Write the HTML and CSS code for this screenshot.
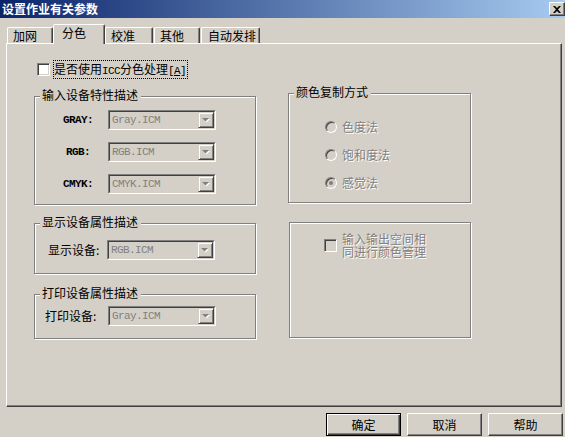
FILE: index.html
```html
<!DOCTYPE html>
<html>
<head>
<meta charset="utf-8">
<title>设置作业有关参数</title>
<link rel="stylesheet" href="styles.css">
</head>
<body>
<div class="titlebar">
  <span class="title">设置作业有关参数</span>
  <span class="close"><svg width="8" height="7" viewBox="0 0 8 7"><path d="M0 0h2l2 2 2-2h2L5 3.5 8 7H6L4 5 2 7H0l3-3.5z" fill="#000"/></svg></span>
</div>
<div class="tabs">
  <div class="tab t1">加网</div>
  <div class="tab t2 active">分色</div>
  <div class="tab t3">校准</div>
  <div class="tab t4">其他</div>
  <div class="tab t5">自动发排</div>
</div>
<div class="panel">
  <div class="col col-left">
    <div class="check-row">
      <span class="checkbox"></span>
      <span class="focus">是否使用<span class="mono">ICC</span>分色处理<span class="mono">[<u>A</u>]</span></span>
    </div>
    <div class="group g1">
      <span class="legend">输入设备特性描述</span>
      <div class="row">
        <span class="lbl">GRAY:</span>
        <div class="combo"><div class="combo-in"><span class="val">Gray.ICM</span><span class="ddbtn"><svg width="8" height="5" viewBox="0 0 8 5"><path d="M1 1h7L4.5 4.5z" fill="#fff"/><path d="M0 0h7L3.5 3.5z" fill="#808080"/></svg></span></div></div>
      </div>
      <div class="row">
        <span class="lbl">RGB:</span>
        <div class="combo"><div class="combo-in"><span class="val">RGB.ICM</span><span class="ddbtn"><svg width="8" height="5" viewBox="0 0 8 5"><path d="M1 1h7L4.5 4.5z" fill="#fff"/><path d="M0 0h7L3.5 3.5z" fill="#808080"/></svg></span></div></div>
      </div>
      <div class="row">
        <span class="lbl">CMYK:</span>
        <div class="combo"><div class="combo-in"><span class="val">CMYK.ICM</span><span class="ddbtn"><svg width="8" height="5" viewBox="0 0 8 5"><path d="M1 1h7L4.5 4.5z" fill="#fff"/><path d="M0 0h7L3.5 3.5z" fill="#808080"/></svg></span></div></div>
      </div>
    </div>
    <div class="group g2">
      <span class="legend">显示设备属性描述</span>
      <div class="row">
        <span class="lbl2">显示设备:</span>
        <div class="combo"><div class="combo-in"><span class="val">RGB.ICM</span><span class="ddbtn"><svg width="8" height="5" viewBox="0 0 8 5"><path d="M1 1h7L4.5 4.5z" fill="#fff"/><path d="M0 0h7L3.5 3.5z" fill="#808080"/></svg></span></div></div>
      </div>
    </div>
    <div class="group g3">
      <span class="legend">打印设备属性描述</span>
      <div class="row">
        <span class="lbl2">打印设备:</span>
        <div class="combo"><div class="combo-in"><span class="val">Gray.ICM</span><span class="ddbtn"><svg width="8" height="5" viewBox="0 0 8 5"><path d="M1 1h7L4.5 4.5z" fill="#fff"/><path d="M0 0h7L3.5 3.5z" fill="#808080"/></svg></span></div></div>
      </div>
    </div>
  </div>
  <div class="col col-right">
    <div class="group r1">
      <span class="legend">颜色复制方式</span>
      <div class="radio-row"><span class="radio"></span><span class="dis">色度法</span></div>
      <div class="radio-row"><span class="radio"></span><span class="dis">饱和度法</span></div>
      <div class="radio-row"><span class="radio checked"></span><span class="dis">感觉法</span></div>
    </div>
    <div class="group r2">
      <div class="check-row2">
        <span class="checkbox disabled"></span>
        <span class="dis two">输入输出空间相<br>同进行颜色管理</span>
      </div>
    </div>
  </div>
</div>
<div class="buttons">
  <div class="btn default">确定</div>
  <div class="btn">取消</div>
  <div class="btn">帮助</div>
</div>
</body>
</html>
```

FILE: styles.css
```css
* { box-sizing: border-box; }
html, body { margin: 0; padding: 0; }
body {
  width: 565px;
  height: 437px;
  overflow: hidden;
  background: #d4d0c8;
  font-family: "Noto Sans CJK SC", "Noto Sans CJK JP", sans-serif;
  font-size: 12px;
  line-height: 12px;
  color: #000;
}
.mono {
  font-family: "Liberation Mono", "DejaVu Sans Mono", monospace;
  font-size: 11px;
  letter-spacing: -0.6px;
}

.titlebar {
  height: 18px;
  background: linear-gradient(to right, #0a246a, #a6caf0);
  display: flex;
  align-items: center;
  justify-content: space-between;
  padding-left: 2px;
}
.title { color: #fff; font-weight: bold; font-size: 12px; }
.close {
  width: 16px;
  height: 14px;
  background: #d4d0c8;
  border: 1px solid;
  border-color: #fff #404040 #404040 #fff;
  box-shadow: inset -1px -1px 0 #808080;
  display: flex;
  align-items: center;
  justify-content: center;
}

.tabs {
  display: flex;
  align-items: flex-end;
  height: 19px;
  margin-top: 6px;
  padding-left: 7px;
}
.tab {
  height: 16px;
  border: 1px solid;
  border-bottom: 0;
  border-color: #fff #404040 transparent #fff;
  box-shadow: inset -1px 0 0 #808080;
  border-radius: 2px 2px 0 0;
  text-align: left;
  padding: 2px 0 0 5px;
}
.tab.active {
  height: 20px;
  margin-bottom: -1px;
  position: relative;
  z-index: 1;
  background: #d4d0c8;
  padding: 2px 0 0 8px;
}
.t1 { width: 46px; }
.t2 { width: 52px; }
.t3 { width: 48px; }
.t4 { width: 46px; margin-left: 1px; }
.t5 { width: 59px; margin-left: 1px; padding-left: 6px; }

.panel {
  margin-left: 6px;
  width: 556px;
  height: 364px;
  border: 1px solid;
  border-color: #fff #404040 #404040 #fff;
  box-shadow: inset -1px -1px 0 #808080;
  display: flex;
  align-items: flex-start;
  gap: 32px;
  padding: 17px 0 0 27px;
}
.col { display: flex; flex-direction: column; }
.col-left { width: 222px; }
.col-right { width: 183px; margin-top: 32px; }

.check-row { display: flex; align-items: center; height: 16px; padding-left: 3px; gap: 4px; }
.checkbox {
  width: 13px;
  height: 13px;
  border: 1px solid;
  border-color: #808080 #fff #fff #808080;
  box-shadow: inset 1px 1px 0 #404040, inset -1px -1px 0 #d4d0c8;
  background: #fff;
  flex: none;
}
.checkbox.disabled { background: #d4d0c8; }
.focus { outline: 1px dotted #000; outline-offset: 0; padding: 2px 1px 1px 0; line-height: 12px; }

.group {
  position: relative;
  border: 1px solid #808080;
  box-shadow: 1px 1px 0 #fff, inset 1px 1px 0 #fff;
}
.legend {
  position: absolute;
  left: 5px;
  top: -8px;
  padding: 0 3px 0 2px;
  background: #d4d0c8;
  line-height: 12px;
}
.g1 { margin-top: 19px; height: 109px; padding-top: 13px; display: flex; flex-direction: column; gap: 12px; }
.g2 { margin-top: 18px; height: 51px; padding-top: 16px; }
.g3 { margin-top: 20px; height: 45px; padding-top: 11px; }

.row { display: flex; align-items: center; }
.lbl {
  width: 40px;
  margin-left: 23px;
  margin-right: 10px;
  text-align: center;
  font-family: "Liberation Mono", "DejaVu Sans Mono", monospace;
  font-size: 11px;
  font-weight: bold;
  letter-spacing: -0.6px;
}
.lbl2 { width: 54px; }
.g2 .lbl2 { margin-left: 13px; margin-right: 5px; }
.g3 .lbl2 { margin-left: 10px; margin-right: 9px; }

.combo {
  width: 108px;
  height: 20px;
  border: 1px solid;
  border-color: #808080 #fff #fff #808080;
}
.combo-in {
  height: 100%;
  border: 1px solid;
  border-color: #404040 #d4d0c8 #d4d0c8 #404040;
  display: flex;
  align-items: center;
  justify-content: space-between;
  padding-left: 2px;
}
.val {
  font-family: "Liberation Mono", "DejaVu Sans Mono", monospace;
  font-size: 11px;
  letter-spacing: -0.6px;
  color: #808080;
}
.ddbtn {
  width: 16px;
  height: 16px;
  border: 1px solid;
  border-color: #d4d0c8 #404040 #404040 #d4d0c8;
  box-shadow: inset 1px 1px 0 #fff, inset -1px -1px 0 #808080;
  display: flex;
  align-items: center;
  justify-content: center;
  padding-top: 1px;
}

.dis { color: #808080; text-shadow: 1px 1px 0 #fff; }

.r1 { height: 110px; padding: 26px 0 0 36px; display: flex; flex-direction: column; gap: 15px; }
.radio-row { display: flex; align-items: center; gap: 5px; height: 13px; }
.radio {
  width: 12px;
  height: 12px;
  border-radius: 50%;
  border: 1px solid;
  border-color: #808080 #fff #fff #808080;
  box-shadow: inset 1px 1px 0 #404040;
  background: #d4d0c8;
  display: flex;
  align-items: center;
  justify-content: center;
  flex: none;
}
.radio.checked::after {
  content: "";
  width: 4px;
  height: 4px;
  border-radius: 50%;
  background: #808080;
}
.r2 { margin-top: 19px; margin-left: 1px; width: 182px; height: 116px; padding: 9px 0 0 34px; }
.check-row2 { display: flex; align-items: center; gap: 5px; }
.two { line-height: 13px; }

.buttons {
  display: flex;
  justify-content: flex-end;
  gap: 6px;
  padding-right: 2px;
  margin-top: 6px;
}
.btn {
  width: 75px;
  height: 23px;
  border: 1px solid;
  border-color: #fff #404040 #404040 #fff;
  box-shadow: inset -1px -1px 0 #808080;
  display: flex;
  align-items: center;
  justify-content: center;
}
.btn.default {
  border-color: #000;
  box-shadow: inset 1px 1px 0 #fff, inset -1px -1px 0 #404040, inset -2px -2px 0 #808080;
}
```
